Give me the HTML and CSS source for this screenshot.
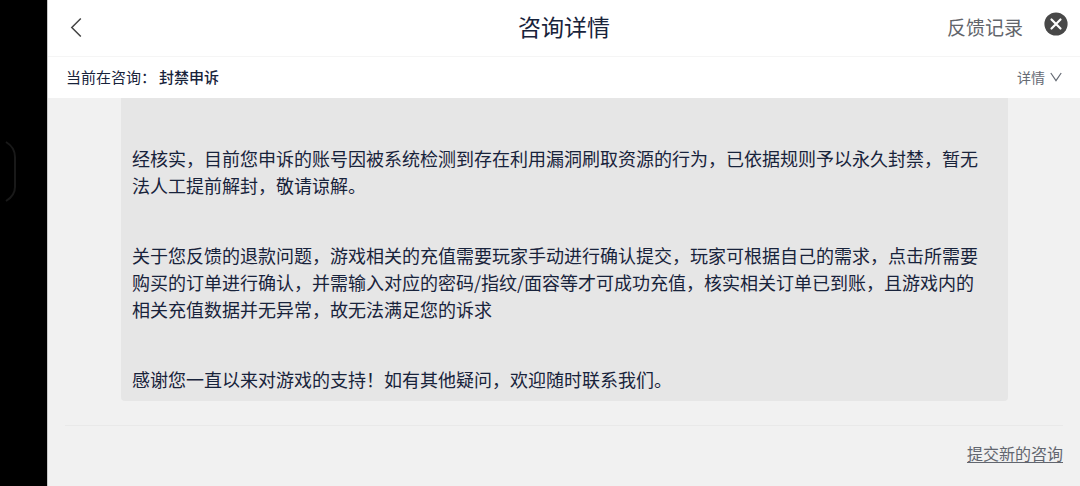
FILE: index.html
```html
<!DOCTYPE html>
<html lang="zh-CN">
<head>
<meta charset="utf-8">
<meta name="viewport" content="width=device-width, initial-scale=1">
<title>咨询详情</title>
<link rel="stylesheet" href="styles.css">
</head>
<body>
<div class="screen">
  <aside class="edge">
    <svg class="edge-handle" width="20" height="64" viewBox="0 0 20 64" fill="none" stroke="#191919" stroke-width="2" aria-hidden="true"><path d="M6 2C11 5 15 9 15 17V47C15 54 11 58 6 61"/></svg>
  </aside>
  <div class="panel">
    <header class="topbar">
      <button class="icon-button back" type="button" aria-label="返回">
        <svg width="12" height="20" viewBox="0 0 12 20" fill="none" stroke="#444" stroke-width="1.5" aria-hidden="true"><path d="M10.8 1.5L1.8 10.5L10.8 19.5"/></svg>
      </button>
      <h1 class="title">咨询详情</h1>
      <div class="actions">
        <a class="records" href="#records">反馈记录</a>
        <button class="icon-button close" type="button" aria-label="关闭">
          <svg width="24" height="24" viewBox="0 0 24 24" aria-hidden="true"><circle cx="12" cy="12" r="11.6" fill="#484848"/><path d="M7.5 7.5L16.5 16.5M16.5 7.5L7.5 16.5" fill="none" stroke="#fff" stroke-width="2.2" stroke-linecap="round"/></svg>
        </button>
      </div>
    </header>
    <div class="subject">
      <p class="subject-text">当前在咨询：<strong class="subject-name">封禁申诉</strong></p>
      <button class="icon-button details" type="button">详情
        <svg width="12" height="10" viewBox="0 0 12 10" fill="none" stroke="#666b74" stroke-width="1.2" aria-hidden="true"><path d="M.8 1L6 8.6L11.2 1"/></svg>
      </button>
    </div>
    <main class="chat">
      <article class="bubble">
        <p class="message">经核实，目前您申诉的账号因被系统检测到存在利用漏洞刷取资源的行为，已依据规则予以永久封禁，暂无法人工提前解封，敬请谅解。</p>
        <p class="message">关于您反馈的退款问题，游戏相关的充值需要玩家手动进行确认提交，玩家可根据自己的需求，点击所需要购买的订单进行确认，并需输入对应的密码/指纹/面容等才可成功充值，核实相关订单已到账，且游戏内的相关充值数据并无异常，故无法满足您的诉求</p>
        <p class="message">感谢您一直以来对游戏的支持！如有其他疑问，欢迎随时联系我们。</p>
      </article>
    </main>
    <footer class="footer">
      <a class="new-inquiry" href="#new">提交新的咨询</a>
    </footer>
  </div>
</div>
</body>
</html>
```
FILE: styles.css
```css
* {
  box-sizing: border-box;
}

body {
  margin: 0;
  background: #f1f1f1;
  color: #18233b;
  font-family: "Noto Sans CJK SC", "Noto Sans", sans-serif;
}

h1,
p {
  margin: 0;
}

.screen {
  display: flex;
  min-height: 100vh;
}

.edge {
  display: flex;
  align-items: center;
  flex: 0 0 47px;
  padding-bottom: 142px;
  background: #000;
}

.panel {
  flex: 1;
  min-width: 0;
  border-left: 1px solid #c8c8c8;
}

.icon-button {
  display: flex;
  align-items: center;
  padding: 0;
  border: 0;
  background: none;
  font-family: inherit;
  cursor: pointer;
}

.topbar {
  display: grid;
  grid-template-columns: 1fr auto 1fr;
  align-items: center;
  height: 57px;
  padding: 0 12px 2px;
  border-bottom: 1px solid #f5f5f5;
  background: #fff;
}

.back {
  width: 34px;
  height: 40px;
  padding-left: 10px;
}

.title {
  padding-bottom: 2px;
  font-size: 23px;
  font-weight: 400;
  line-height: 32px;
}

.actions {
  display: flex;
  justify-content: flex-end;
  align-items: center;
  gap: 21px;
}

.records {
  color: #62656b;
  font-size: 19px;
  line-height: 28px;
  text-decoration: none;
}

.close {
  padding-bottom: 7px;
}

.subject {
  display: flex;
  justify-content: space-between;
  align-items: center;
  height: 41px;
  padding: 0 18px 2px;
  background: #fff;
}

.subject-text {
  font-size: 15px;
  line-height: 24px;
}

.subject-name {
  margin-left: 3px;
  font-weight: 500;
}

.details {
  gap: 5px;
  color: #666b74;
  font-size: 14px;
  line-height: 20px;
}

.chat {
  padding: 0 72px 24px 73px;
}

.bubble {
  display: grid;
  gap: 43px;
  padding: 47px 20px 8px 11px;
  border-radius: 0 0 4px 4px;
  background: #e6e6e6;
}

.message {
  font-size: 18px;
  line-height: 27px;
}

.footer {
  display: flex;
  justify-content: flex-end;
  margin: 0 17px;
  padding: 15px 0;
  border-top: 1px solid #e9e9e9;
}

.new-inquiry {
  color: #62666f;
  font-size: 16px;
  line-height: 24px;
  text-underline-offset: 2px;
}
```
